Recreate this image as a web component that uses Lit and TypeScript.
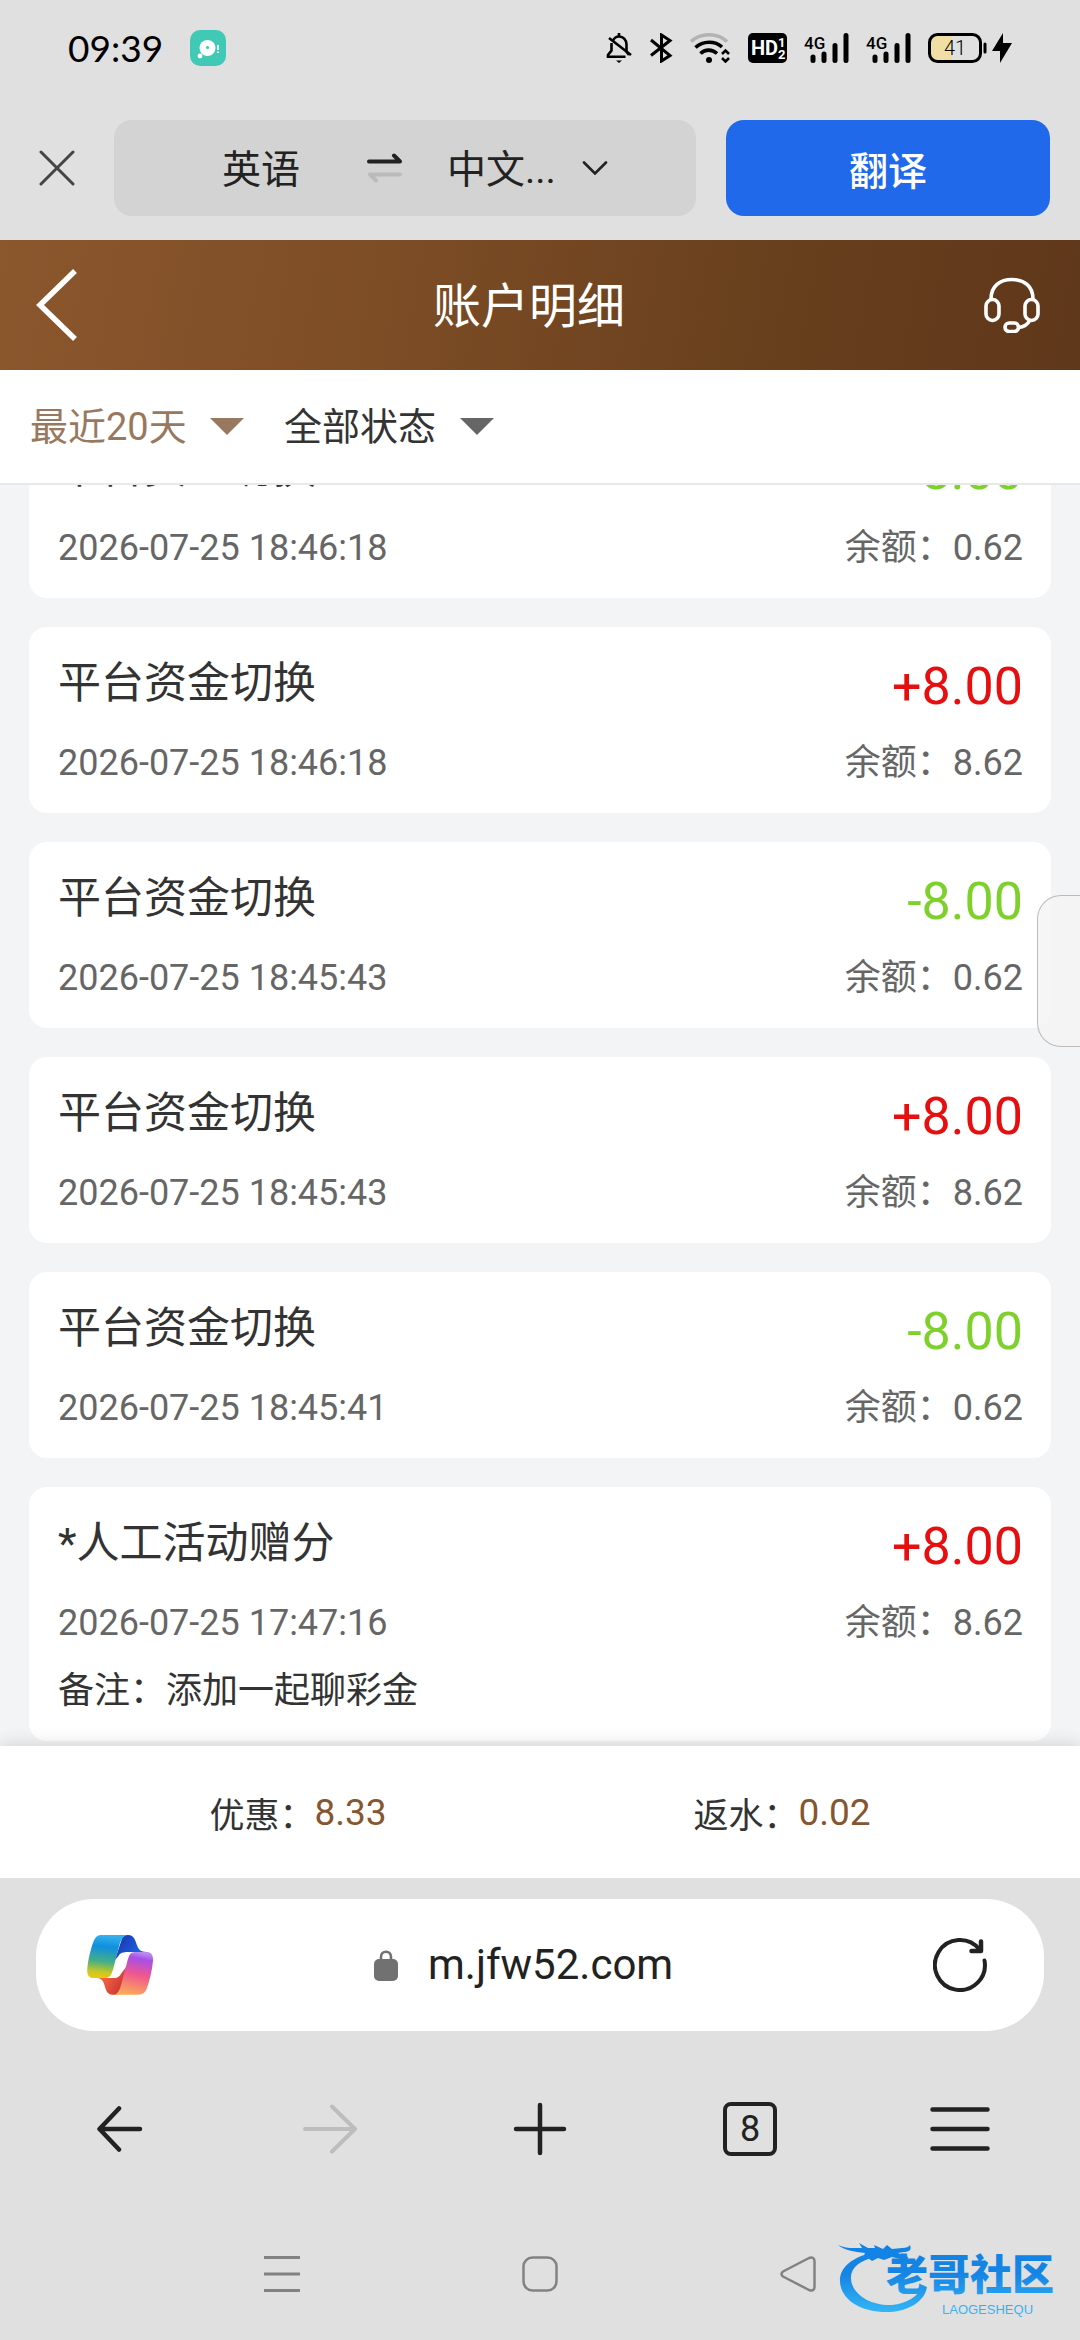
import { LitElement, html, css, nothing } from 'lit';
import { customElement, property } from 'lit/decorators.js';

interface FundRecord {
  title: string;
  time: string;
  amount: string;
  balance: string;
  note?: string;
}

const RECORDS: FundRecord[] = [
  { title: '平台资金切换', time: '2026-07-25 18:46:18', amount: '-8.00', balance: '0.62' },
  { title: '平台资金切换', time: '2026-07-25 18:46:18', amount: '+8.00', balance: '8.62' },
  { title: '平台资金切换', time: '2026-07-25 18:45:43', amount: '-8.00', balance: '0.62' },
  { title: '平台资金切换', time: '2026-07-25 18:45:43', amount: '+8.00', balance: '8.62' },
  { title: '平台资金切换', time: '2026-07-25 18:45:41', amount: '-8.00', balance: '0.62' },
  {
    title: '*人工活动赠分',
    time: '2026-07-25 17:47:16',
    amount: '+8.00',
    balance: '8.62',
    note: '添加一起聊彩金',
  },
];

const reset = css`
  :host,
  * {
    box-sizing: border-box;
  }
  button,
  select,
  input {
    font: inherit;
    color: inherit;
    background: none;
    border: 0;
    padding: 0;
    margin: 0;
    outline: none;
    appearance: none;
  }
  button {
    display: flex;
    align-items: center;
    justify-content: center;
  }
  svg {
    display: block;
    flex: none;
  }
`;

@customElement('status-bar')
export class StatusBar extends LitElement {
  static styles = [
    reset,
    css`
      :host {
        display: flex;
        align-items: center;
        justify-content: space-between;
        height: 96px;
        padding: 0 68px;
        color: #000;
      }
      .left,
      .right {
        display: flex;
        align-items: center;
      }
      .left {
        gap: 27px;
      }
      .right {
        gap: 17px;
      }
      .clock {
        font: 37px/48px Lato, sans-serif;
      }
      .net {
        font: 500 17px Roboto, sans-serif;
      }
      .hd {
        font: 700 20px Roboto, sans-serif;
        fill: #fff;
      }
      .hd-sub {
        font: 700 13px Roboto, sans-serif;
        fill: #fff;
      }
      .level {
        font: 300 20px Roboto, sans-serif;
      }
      .power {
        display: flex;
        align-items: center;
        gap: 5px;
      }
    `,
  ];

  private _signal() {
    return html`
      <svg width="45" height="30" viewBox="0 0 45 30">
        <text class="net" x="0" y="16">4G</text>
        <g stroke="#000" stroke-width="5" stroke-linecap="round">
          <path d="M9 24V27.500M20 21V27.500M31 12.500V27.500M42 2.500V27.500" />
        </g>
      </svg>
    `;
  }

  render() {
    return html`
      <div class="left">
        <span class="clock">09:39</span>
        <svg width="36" height="36" viewBox="0 0 36 36">
          <rect width="36" height="36" rx="10" fill="#40c9b5" />
          <circle cx="17.500" cy="18" r="8" fill="#fff" />
          <circle cx="17.500" cy="17.500" r="1.600" fill="#40c9b5" />
          <circle cx="10" cy="26" r="2.400" fill="#fff" />
          <path d="M28 15v5M28 21.500v1.500" stroke="#fff" stroke-width="1.800" />
        </svg>
      </div>
      <div class="right">
        <svg width="26" height="30" viewBox="0 0 26 30" fill="none" stroke="#000" stroke-width="2.600">
          <path d="M7 7.500C8.500 4.500 10.500 3.500 13 3.500C17.500 3.500 20.500 7 20.500 11.500V18.500L23 22" />
          <path d="M5.500 10V17.500L2 22V23.800H19.500M3 5L25 22M13 0V4" />
          <path d="M10 27.500H16L13 30Z" fill="#000" stroke="none" />
        </svg>
        <svg width="24" height="30" viewBox="0 0 24 30" fill="none" stroke="#000" stroke-width="3">
          <path d="M2 7L21 22.500L12.500 28V2L21 7.500L2 22.500" />
        </svg>
        <svg width="41" height="30" viewBox="0 0 41 30" fill="none">
          <path d="M1 8.500C11-.500 27-.500 37 8.500" stroke="#b3b3b3" stroke-width="3.600" />
          <path d="M5.500 14.500C13 7.500 25 7.500 32 14" stroke="#000" stroke-width="3.600" />
          <path d="M10.500 20.500C15 16 22 16 27 20.500" stroke="#000" stroke-width="3.600" />
          <circle cx="19" cy="27" r="3" fill="#000" />
          <path d="M32 21L35.500 17.500L39 21M32 25L35.500 28.500L39 25" stroke="#000" stroke-width="2.600" />
        </svg>
        <svg width="39" height="30" viewBox="0 0 39 30">
          <rect width="39" height="30" rx="5" />
          <text class="hd" x="3" y="22">HD</text>
          <text class="hd-sub" x="30" y="14">1</text>
          <text class="hd-sub" x="30" y="26">2</text>
        </svg>
        ${this._signal()} ${this._signal()}
        <div class="power">
          <svg width="59" height="30" viewBox="0 0 59 30">
            <rect x="2" y="2" width="22" height="26" rx="7" fill="#f0dfa5" />
            <rect x="15" y="2" width="9" height="26" fill="#f0dfa5" />
            <rect x="1.500" y="1.500" width="51" height="27" rx="8" fill="none" stroke="#000" stroke-width="3" />
            <path d="M57 11V19" stroke="#000" stroke-width="3" stroke-linecap="round" />
            <text class="level" x="16" y="22">41</text>
          </svg>
          <svg width="20" height="30" viewBox="0 0 20 30">
            <path d="M11 0L0 18H8L8 30L20 10H11Z" />
          </svg>
        </div>
      </div>
    `;
  }
}

@customElement('translate-bar')
export class TranslateBar extends LitElement {
  static styles = [
    reset,
    css`
      :host {
        display: flex;
        align-items: center;
        gap: 30px;
        padding: 24px 30px 24px 39px;
        color: #222;
        font-size: 39px;
      }
      .close {
        width: 36px;
        height: 36px;
        margin-right: 9px;
      }
      .langs {
        flex: 582;
        height: 96px;
        border-radius: 18px;
        background: #d3d3d3;
        display: flex;
        align-items: center;
        justify-content: center;
      }
      .langs select {
        padding-top: 4px;
      }
      .source {
        margin-left: 20px;
      }
      .swap {
        margin: 0 44px 0 66px;
      }
      .target {
        display: flex;
        align-items: center;
        gap: 26px;
      }
      .go {
        flex: 324;
        height: 96px;
        border-radius: 18px;
        background: #2069ea;
        color: #fff;
        font-weight: 500;
      }
    `,
  ];

  render() {
    return html`
      <button class="close" aria-label="关闭">
        <svg width="36" height="36" viewBox="0 0 36 36" stroke="#444" stroke-width="3" stroke-linecap="round">
          <path d="M2 2L34 34M34 2L2 34" />
        </svg>
      </button>
      <div class="langs">
        <select class="source" aria-label="源语言">
          <option>英语</option>
        </select>
        <button class="swap" aria-label="交换">
          <svg width="36" height="30" viewBox="0 0 36 30" fill="none" stroke-width="4" stroke-linecap="round" stroke-linejoin="round">
            <path d="M2 8.500H33L27 2.500" stroke="#222" />
            <path d="M33 21.500H3L9 27.500" stroke="#bbb" />
          </svg>
        </button>
        <label class="target">
          <select aria-label="目标语言">
            <option>中文...</option>
          </select>
          <svg width="26" height="14" viewBox="0 0 26 14" fill="none" stroke="#222" stroke-width="2.600" stroke-linecap="round">
            <path d="M2 1.500L13 12.500L24 1.500" />
          </svg>
        </label>
      </div>
      <button class="go">翻译</button>
    `;
  }
}

@customElement('fund-card')
export class FundCard extends LitElement {
  static styles = [
    reset,
    css`
      :host {
        display: block;
        flex: none;
        padding: 24px 28px 26px 29px;
        border-radius: 18px;
        background: #fff;
        color: #666;
        font-size: 36px;
        line-height: 48px;
      }
      .row {
        display: flex;
        justify-content: space-between;
        align-items: flex-start;
      }
      .head {
        height: 72px;
        margin-bottom: 16px;
      }
      .title {
        color: #333;
        font-size: 43px;
        line-height: 64px;
      }
      .amount {
        color: #e60e0e;
        font-size: 52px;
        line-height: 72px;
      }
      .amount.out {
        color: #7ed02b;
      }
      .note {
        margin-top: 20px;
        color: #333;
      }
    `,
  ];

  @property({ attribute: false })
  record!: FundRecord;

  render() {
    const { title, time, amount, balance, note } = this.record;
    return html`
      <div class="row head">
        <span class="title">${title}</span>
        <span class="amount ${amount.startsWith('-') ? 'out' : ''}">${amount}</span>
      </div>
      <div class="row">
        <span>${time}</span>
        <span>余额：${balance}</span>
      </div>
      ${note ? html`<div class="note">备注：${note}</div>` : nothing}
    `;
  }
}

@customElement('account-page')
export class AccountPage extends LitElement {
  static styles = [
    reset,
    css`
      :host {
        position: relative;
        display: flex;
        flex-direction: column;
        min-height: 0;
        overflow: hidden;
        background: #f3f4f6;
      }
      header {
        display: grid;
        grid-template-columns: 60px 1fr 60px;
        align-items: center;
        height: 130px;
        padding: 0 40px 0 34px;
        background: linear-gradient(100deg, #8b572d, #7d4d26 35%, #69401d 70%, #5f371a);
        color: #fff;
      }
      h1 {
        margin: 0;
        padding: 4px 16px 0 0;
        font-size: 48px;
        font-weight: 400;
        line-height: 64px;
        text-align: center;
      }
      .back {
        justify-content: flex-start;
      }
      .service {
        justify-content: flex-end;
      }
      .filters {
        display: flex;
        flex: none;
        align-items: center;
        gap: 40px;
        height: 115px;
        padding: 0 30px;
        border-bottom: 2px solid #e8eaea;
        background: #fff;
        color: #333;
        font-size: 38px;
      }
      .filter {
        display: flex;
        align-items: center;
        gap: 23px;
      }
      .filter.active {
        color: #997860;
      }
      .list {
        flex: 1;
        min-height: 0;
        display: flex;
        flex-direction: column;
        justify-content: flex-end;
        gap: 29px;
        overflow: hidden;
        padding: 0 29px 5px;
      }
      .summary {
        position: relative;
        display: flex;
        height: 132px;
        padding: 0 56px;
        background: #fff;
        box-shadow: 0 0 18px rgba(0, 0, 0, 0.16);
        color: #333;
        font-size: 35px;
      }
      .total {
        flex: 1;
        display: flex;
        align-items: center;
        justify-content: center;
      }
      .total b {
        color: #855630;
        font-size: 37px;
        font-weight: 400;
      }
      .handle {
        position: absolute;
        top: 655px;
        right: 0;
        width: 43px;
        height: 152px;
        border: 1px solid #bbb;
        border-right: 0;
        border-radius: 24px 0 0 24px;
        background: rgba(244, 244, 244, 0.8);
      }
    `,
  ];

  private _filter(label: string, active = false) {
    return html`
      <label class="filter ${active ? 'active' : ''}">
        <select aria-label=${label}>
          <option>${label}</option>
        </select>
        <svg width="34" height="17" viewBox="0 0 34 17">
          <path d="M0 0H34L17 17Z" fill=${active ? '#997860' : '#666'} />
        </svg>
      </label>
    `;
  }

  render() {
    return html`
      <header>
        <button class="back" aria-label="返回">
          <svg width="46" height="74" viewBox="0 0 46 74" fill="none" stroke="#fff" stroke-width="5.500">
            <path d="M41 3L6 37L41 71" />
          </svg>
        </button>
        <h1>账户明细</h1>
        <button class="service" aria-label="客服">
          <svg width="56" height="56" viewBox="0 0 56 56" fill="none" stroke="#fff" stroke-width="3.600">
            <path d="M7 22C7 9 16 2.500 28 2.500C40 2.500 49 9 49 22" />
            <rect x="2" y="22.500" width="13" height="21" rx="6.500" />
            <rect x="41" y="22.500" width="13" height="21" rx="6.500" />
            <path d="M46 43C44 47 40 50 34.500 50.500" />
            <rect x="21" y="46" width="13.500" height="8.500" rx="4.200" />
          </svg>
        </button>
      </header>
      <div class="filters">${this._filter('最近20天', true)} ${this._filter('全部状态')}</div>
      <div class="list">${RECORDS.map((r) => html`<fund-card .record=${r}></fund-card>`)}</div>
      <div class="summary">
        <div class="total">优惠：<b>8.33</b></div>
        <div class="total">返水：<b>0.02</b></div>
      </div>
      <button class="handle" aria-label="侧边栏"></button>
    `;
  }
}

@customElement('browser-bar')
export class BrowserBar extends LitElement {
  static styles = [
    reset,
    css`
      :host {
        display: block;
        padding: 21px 36px 0;
        color: #222;
      }
      .address {
        display: grid;
        grid-template-columns: 66px 1fr 66px;
        align-items: center;
        height: 132px;
        padding: 0 51px;
        border-radius: 58px;
        background: #fff;
      }
      .url {
        display: flex;
        align-items: center;
        justify-content: center;
        gap: 30px;
        padding-right: 26px;
      }
      .url input {
        width: 252px;
        font-size: 42px;
        line-height: 56px;
      }
      .tools {
        display: grid;
        grid-template-columns: repeat(5, 1fr);
        height: 196px;
        margin: 0 -21px;
      }
      .count {
        width: 54px;
        height: 54px;
        border: 4px solid #222;
        border-radius: 8px;
        font-size: 36px;
        line-height: 46px;
        text-align: center;
      }
    `,
  ];

  render() {
    return html`
      <div class="address">
        <button aria-label="Copilot">
          <svg width="66" height="60" viewBox="81 74 199 181">
            <defs>
              <linearGradient id="sky" x1="0.3" y1="0" x2="0.2" y2="1">
                <stop offset="0" stop-color="#35b0ee" />
                <stop offset="0.25" stop-color="#0f8fe0" />
                <stop offset="0.6" stop-color="#45ae86" />
                <stop offset="0.85" stop-color="#c8c823" />
                <stop offset="1" stop-color="#f2c80f" />
              </linearGradient>
              <linearGradient id="navy" x1="0" y1="0" x2="1" y2="0.6">
                <stop offset="0.1" stop-color="#1a35b0" />
                <stop offset="1" stop-color="#1f6ae8" />
              </linearGradient>
              <linearGradient id="rose" x1="0.6" y1="0" x2="0.4" y2="1">
                <stop offset="0" stop-color="#b98af0" />
                <stop offset="0.14" stop-color="#a84fe6" />
                <stop offset="0.5" stop-color="#ee5691" />
                <stop offset="1" stop-color="#fbab55" />
              </linearGradient>
              <linearGradient id="ember" x1="0" y1="0" x2="1" y2="0.5">
                <stop offset="0.1" stop-color="#ff7a42" />
                <stop offset="1" stop-color="#cf3537" />
              </linearGradient>
            </defs>
            <path fill="url(#navy)" d="M190 74H205C224 74 227 92 232 106C237 120 245 125 260 125H205C190 125 181 127 176 137L165 150Z" />
            <path fill="url(#ember)" d="M105 204H160C172 204 180 200 184 190L200 170L186 230L172 254H158C142 254 138 240 134 226C129 209 122 204 105 204Z" />
            <path fill="url(#sky)" d="M127 74H206C190 75 183 88 178 106L160 176C154 197 149 204 134 204H103C84 204 80 192 82 174C84 150 92 116 100 95C106 79 113 74 127 74Z" />
            <path fill="url(#rose)" d="M260 125C276 125 281 135 280 152C278 180 270 210 262 234C256 249 249 254 235 254H160C174 253 180 238 184 223L203 152C208 133 212 125 228 125Z" />
          </svg>
        </button>
        <div class="url">
          <svg width="24" height="31" viewBox="0 0 24 31">
            <rect y="9" width="24" height="22" rx="5" fill="#717171" />
            <path d="M7 12V7C7 0 17 0 17 7V12" fill="none" stroke="#717171" stroke-width="2.600" />
          </svg>
          <input aria-label="网址" value="m.jfw52.com" />
        </div>
        <button aria-label="刷新">
          <svg width="54" height="54" viewBox="0 0 54 54" fill="none" stroke="#222" stroke-width="4" stroke-linecap="round" stroke-linejoin="round">
            <path d="M51.500 22.500A25 25 0 1 1 46.500 11.500" />
            <path d="M48 3.500V13H38.500" stroke-width="4.500" />
          </svg>
        </button>
      </div>
      <div class="tools">
        <button aria-label="后退">
          <svg width="46" height="46" viewBox="0 0 46 46" fill="none" stroke="#222" stroke-width="4.500" stroke-linecap="round" stroke-linejoin="round">
            <path d="M43 23H3M22 2.500L2.500 23L22 43.500" />
          </svg>
        </button>
        <button aria-label="前进">
          <svg width="54" height="50" viewBox="0 0 54 50" fill="none" stroke="#bdbdbd" stroke-width="4" stroke-linecap="round" stroke-linejoin="round">
            <path d="M2 25H51M29 2.500L52 25L29 47.500" />
          </svg>
        </button>
        <button aria-label="新标签">
          <svg width="54" height="54" viewBox="0 0 54 54" stroke="#222" stroke-width="4.500" stroke-linecap="round">
            <path d="M3 27H51M27 3V51" />
          </svg>
        </button>
        <button aria-label="标签页"><span class="count">8</span></button>
        <button aria-label="菜单">
          <svg width="60" height="46" viewBox="0 0 60 46" stroke="#222" stroke-width="4.500" stroke-linecap="round">
            <path d="M2.500 3.500H57.500M2.500 23H57.500M2.500 42.500H57.500" />
          </svg>
        </button>
      </div>
    `;
  }
}

@customElement('system-nav')
export class SystemNav extends LitElement {
  static styles = [
    reset,
    css`
      :host {
        position: relative;
        display: grid;
        grid-template-columns: repeat(3, 258px);
        justify-content: center;
        height: 113px;
        padding-bottom: 20px;
      }
      .brand {
        position: absolute;
        right: 14px;
        bottom: 22px;
      }
      .name {
        font: 900 42px 'Noto Sans CJK SC', sans-serif;
      }
      .latin {
        font: 13px 'Liberation Sans', sans-serif;
      }
    `,
  ];

  render() {
    return html`
      <button aria-label="最近任务">
        <svg width="36" height="38" viewBox="0 0 36 38" stroke="#828282" stroke-width="3">
          <path d="M0 2.500H36M0 19H36M0 35.500H36" />
        </svg>
      </button>
      <button aria-label="主屏幕">
        <svg width="36" height="36" viewBox="0 0 36 36" fill="none" stroke="#828282" stroke-width="2.500">
          <rect x="1.500" y="1.500" width="33" height="33" rx="9" />
        </svg>
      </button>
      <button aria-label="返回">
        <svg width="36" height="36" viewBox="0 0 36 36" fill="none" stroke="#828282" stroke-width="2.500" stroke-linejoin="round">
          <path d="M3 15.500L29 2C32 .800 34.500 2 34.500 5V31C34.500 34 32 35.200 29 34L3 20.500C1 19 1 17 3 15.500Z" />
        </svg>
      </button>
      <svg class="brand" width="228" height="78" viewBox="0 0 228 78" role="img">
        <defs>
          <linearGradient id="azure" gradientUnits="userSpaceOnUse" x1="0" y1="8" x2="0" y2="74">
            <stop offset="0" stop-color="#1282e4" />
            <stop offset="0.4" stop-color="#1585e5" />
            <stop offset="1" stop-color="#35b8f6" />
          </linearGradient>
        </defs>
        <g fill="url(#azure)">
          <path d="M34 13C14 17 1 28 2 42C3 59 22 73 52 72C71 71 87 61 89 47L86 46C80 56 68 64 54 65C32 66 14 54 13 39C12 28 22 20 38 17Z" />
          <path d="M0 5C8 9 16 8 24 8L21 3L30 8L37 8L36 5L45 9L49 5L54 9L64 8C68 8 71 7 72 5C74 10 71 12 66 12L60 13L70 17C71 19 68 20 62 19L54 17L46 20L40 18L34 21L30 18L23 22L27 13C16 12 6 10 0 5Z" />
          <text class="name" x="48" y="50">老哥社区</text>
          <text class="latin" x="104" y="74">LAOGESHEQU</text>
        </g>
      </svg>
    `;
  }
}

@customElement('app-root')
export class AppRoot extends LitElement {
  static styles = css`
    :host {
      display: flex;
      flex-direction: column;
      height: 100vh;
      overflow: hidden;
      background: #e0e0e0;
      font-family: Roboto, 'Noto Sans CJK SC', sans-serif;
    }
    account-page {
      flex: 1;
    }
  `;

  render() {
    return html`
      <status-bar></status-bar>
      <translate-bar></translate-bar>
      <account-page></account-page>
      <browser-bar></browser-bar>
      <system-nav></system-nav>
    `;
  }
}
